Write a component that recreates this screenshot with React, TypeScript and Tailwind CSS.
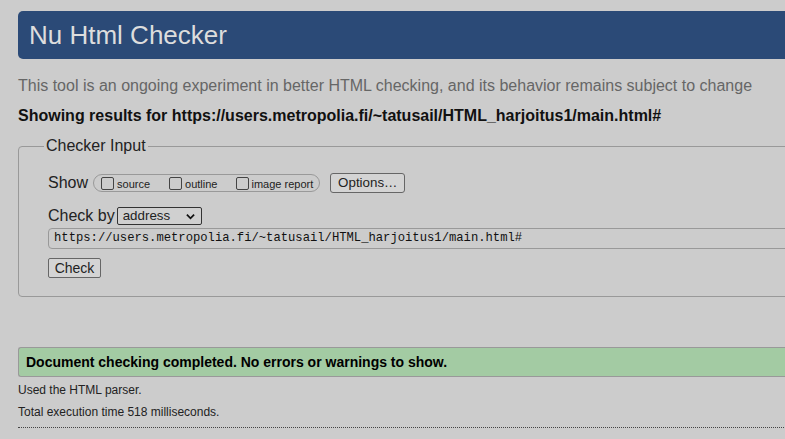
export default function App() {
  return (
    <div className="w-[785px] h-[439px] overflow-hidden bg-[#cccccc] pl-[18px] pt-[11px] font-['Liberation_Sans',Arial,sans-serif] text-[#222]">
      <div className="w-[900px]">
        {/* Banner */}
        <div className="h-[48px] rounded-l-[5px] bg-[#2b4a77] flex items-center pl-[11px]">
          <h1 className="text-[26px] leading-none text-[#dddddd]">Nu Html Checker</h1>
        </div>

        <p className="mt-[17px] text-[16px] leading-[20px] text-[#666666]">
          This tool is an ongoing experiment in better HTML checking, and its behavior remains subject to change
        </p>
        <p className="mt-[10px] text-[16px] leading-[20px] font-bold text-[#111]">
          Showing results for https://users.metropolia.fi/~tatusail/HTML_harjoitus1/main.html#
        </p>

        {/* Checker input */}
        <fieldset className="mt-[10px] border border-[#999999] rounded-[4px] p-0">
          <legend className="ml-[25px] px-[2px] text-[16px] leading-[20px]">Checker Input</legend>
          <div className="pl-[29px] pt-[17px] pb-[18px]">
            <div className="flex items-center h-[20px]">
              <span className="text-[16px] leading-[20px]">Show</span>
              <div className="ml-[5px] h-[18px] flex items-center rounded-full border border-[#999999] pl-[7px] pr-[6px] text-[11px]">
                <span className="w-[13px] h-[13px] rounded-[2px] border border-[#444] bg-[#cccccc]" />
                <span className="ml-[3px] mt-[2px]">source</span>
                <span className="ml-[19px] w-[13px] h-[13px] rounded-[2px] border border-[#444] bg-[#cccccc]" />
                <span className="ml-[3px] mt-[2px]">outline</span>
                <span className="ml-[19px] w-[13px] h-[13px] rounded-[2px] border border-[#444] bg-[#cccccc]" />
                <span className="ml-[2px] mt-[2px]">image report</span>
              </div>
              <button className="ml-[10px] h-[20px] w-[75px] rounded-[3px] border border-[#666] bg-[#d4d4d4] text-[13.33px] leading-none">
                Options…
              </button>
            </div>

            <div className="mt-[14px] flex items-center h-[18px]">
              <span className="text-[16px] leading-[20px]">Check by</span>
              <div className="ml-[2px] h-[18px] w-[85px] rounded-[2px] border border-[#333] bg-[#d0d0d0] flex items-center pl-[5px] pr-[5px] text-[13.33px]">
                <span className="flex-1 leading-none">address</span>
                <svg width="9" height="7" viewBox="0 0 10 7" className="mr-[1px]">
                  <path d="M1 1.5 L5 5.5 L9 1.5" fill="none" stroke="#111" strokeWidth="2" />
                </svg>
              </div>
            </div>

            <div className="mt-[3px] h-[21px] rounded-[4px] border border-[#999999] flex items-center pl-[5px] font-['Liberation_Mono','DejaVu_Sans_Mono',monospace] text-[12.2px] text-[#111]">
              https://users.metropolia.fi/~tatusail/HTML_harjoitus1/main.html#
            </div>

            <button className="mt-[9px] h-[20px] w-[53px] rounded-[2px] border border-[#666] bg-[#d4d4d4] text-[14px] leading-none block">
              Check
            </button>
          </div>
        </fieldset>

        {/* Result */}
        <div className="mt-[50px] h-[30px] rounded-l-[3px] border border-r-0 border-[#999999] bg-[#a3cba3] flex items-center pl-[7px]">
          <span className="text-[14px] font-bold text-black">Document checking completed. No errors or warnings to show.</span>
        </div>

        <p className="mt-[5px] text-[12px] leading-[16px]">Used the HTML parser.</p>
        <p className="mt-[6px] text-[12px] leading-[16px]">Total execution time 518 milliseconds.</p>
        <div className="mt-[7px] border-t border-dotted border-[#444]" />
      </div>
    </div>
  );
}
